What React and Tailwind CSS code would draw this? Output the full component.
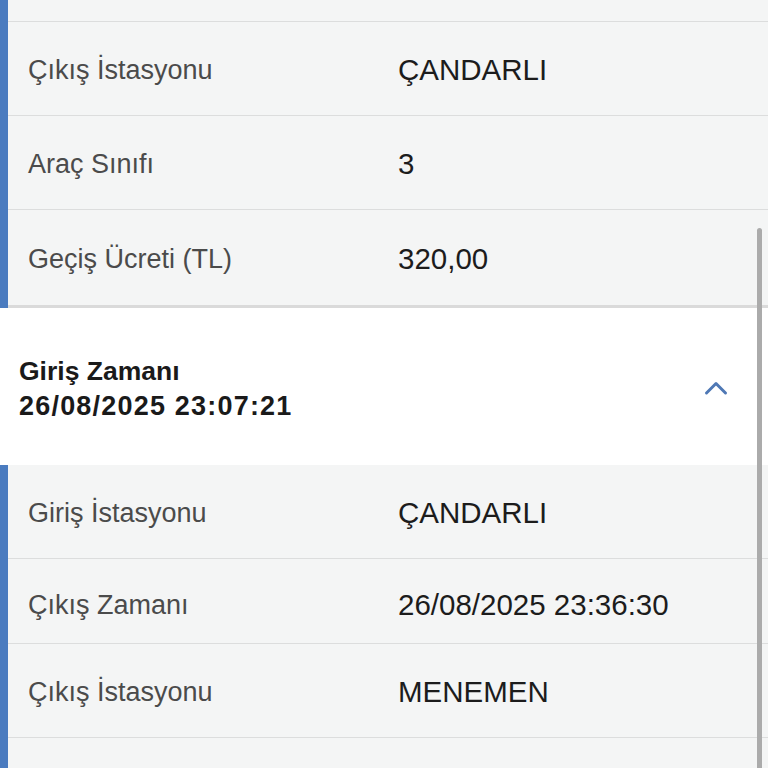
import React from "react";

const Row = ({ label, value, h = "h-[94px]", pad = "pt-[3px]" }) => (
  <div className={`${h} ${pad} flex items-center pl-5 border-b border-[#dcdddd]`}>
    <span className="w-[370px] text-[27px] text-[#4b4b4b]">{label}</span>
    <span className="text-[29.5px] text-[#1c1c1c]">{value}</span>
  </div>
);

const Section = ({ children }) => (
  <div className="flex bg-[#f4f5f5]">
    <div className="w-2 shrink-0 bg-[#4a7bbf]" />
    <div className="flex-1">{children}</div>
  </div>
);

export default function App() {
  return (
    <div className="relative w-[768px] h-[768px] overflow-hidden bg-white font-['Liberation_Sans',Arial,sans-serif]">
      {/* previous record */}
      <Section>
        <div className="h-[22px] border-b border-[#dcdddd]" />
        <Row label="Çıkış İstasyonu" value="ÇANDARLI" />
        <Row label="Araç Sınıfı" value="3" />
        <div className="h-[98px] pt-[3px] flex items-center pl-5 border-b-[3px] border-[#dadada]">
          <span className="w-[370px] text-[27px] text-[#4b4b4b]">Geçiş Ücreti (TL)</span>
          <span className="text-[29.5px] text-[#1c1c1c]">320,00</span>
        </div>
      </Section>

      {/* accordion header */}
      <div className="h-[157px] flex items-center justify-between pl-[19px] pr-[40px] bg-white">
        <div className="font-bold leading-[35px] text-[#1a1a1a] pt-[4px]">
          <div className="text-[26.5px]">Giriş Zamanı</div>
          <div className="text-[27px] tracking-[1.2px]">26/08/2025 23:07:21</div>
        </div>
        <svg width="24" height="16" viewBox="0 0 24 16" fill="none" className="mt-[2px]">
          <path d="M2.5 13 L12 3.5 L21.5 13" stroke="#4f78b5" strokeWidth="3" strokeLinecap="round" strokeLinejoin="round" />
        </svg>
      </div>

      <Section>
        <Row label="Giriş İstasyonu" value="ÇANDARLI" />
        <Row label="Çıkış Zamanı" value="26/08/2025 23:36:30" h="h-[85px]" pad="pt-[9px]" />
        <Row label="Çıkış İstasyonu" value="MENEMEN" />
        <div className="h-[60px]" />
      </Section>

      {/* scrollbar */}
      <div className="absolute left-[757px] top-[228px] w-[5px] h-[560px] rounded-full bg-[#ababab]" />
    </div>
  );
}
